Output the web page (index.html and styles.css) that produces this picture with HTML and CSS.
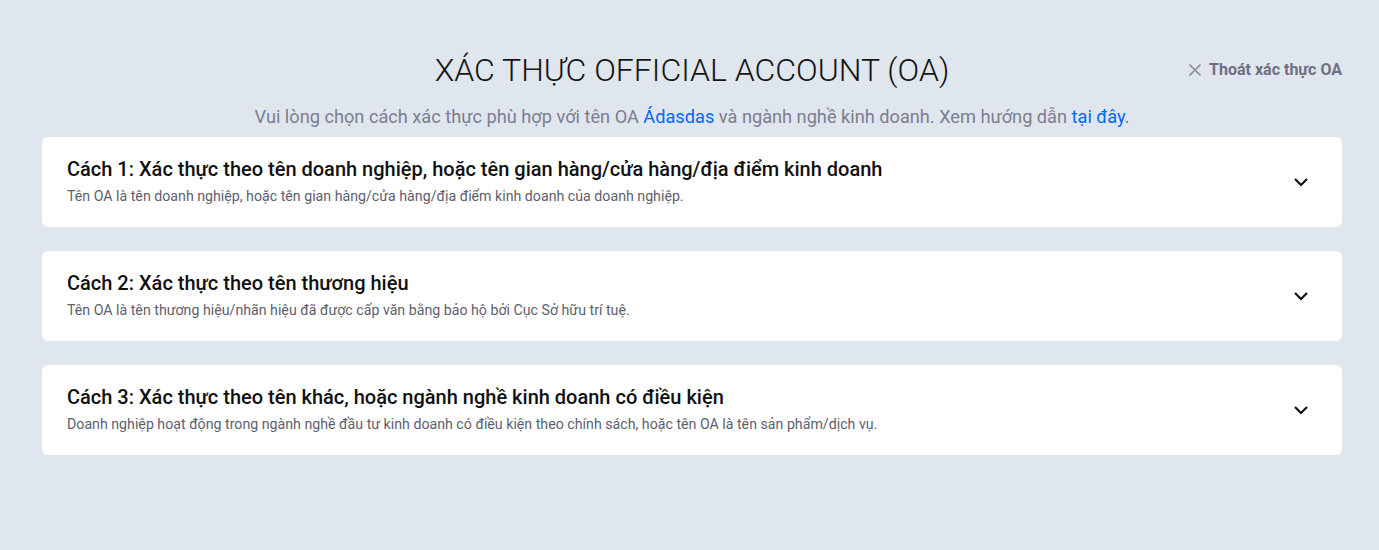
FILE: index.html
```html
<!DOCTYPE html>
<html lang="vi">
<head>
<meta charset="utf-8">
<link rel="stylesheet" href="styles.css">
</head>
<body>
<div class="page">
  <header class="header">
    <h1 class="title">XÁC THỰC OFFICIAL ACCOUNT (OA)</h1>
    <a class="exit" href="#">
      <svg class="exit-icon" width="14" height="14" viewBox="0 0 14 14"><path d="M1.5 1.5 L12.5 12.5 M12.5 1.5 L1.5 12.5" stroke="#8a8a9c" stroke-width="1.6" fill="none"/></svg>
      <span>Thoát xác thực OA</span>
    </a>
  </header>
  <p class="subtitle">Vui lòng chọn cách xác thực phù hợp với tên OA <span class="link">Ádasdas</span> và ngành nghề kinh doanh. Xem hướng dẫn <span class="link">tại đây</span>.</p>
  <div class="cards">
    <div class="card">
      <div class="card-text">
        <div class="card-title">Cách 1: Xác thực theo tên doanh nghiệp, hoặc tên gian hàng/cửa hàng/địa điểm kinh doanh</div>
        <div class="card-desc">Tên OA là tên doanh nghiệp, hoặc tên gian hàng/cửa hàng/địa điểm kinh doanh của doanh nghiệp.</div>
      </div>
      <svg class="chev" width="16" height="16" viewBox="0 0 16 16"><path d="M2 5 L8 11 L14 5" stroke="#111" stroke-width="2.2" fill="none"/></svg>
    </div>
    <div class="card">
      <div class="card-text">
        <div class="card-title">Cách 2: Xác thực theo tên thương hiệu</div>
        <div class="card-desc">Tên OA là tên thương hiệu/nhãn hiệu đã được cấp văn bằng bảo hộ bởi Cục Sở hữu trí tuệ.</div>
      </div>
      <svg class="chev" width="16" height="16" viewBox="0 0 16 16"><path d="M2 5 L8 11 L14 5" stroke="#111" stroke-width="2.2" fill="none"/></svg>
    </div>
    <div class="card">
      <div class="card-text">
        <div class="card-title">Cách 3: Xác thực theo tên khác, hoặc ngành nghề kinh doanh có điều kiện</div>
        <div class="card-desc">Doanh nghiệp hoạt động trong ngành nghề đầu tư kinh doanh có điều kiện theo chính sách, hoặc tên OA là tên sản phẩm/dịch vụ.</div>
      </div>
      <svg class="chev" width="16" height="16" viewBox="0 0 16 16"><path d="M2 5 L8 11 L14 5" stroke="#111" stroke-width="2.2" fill="none"/></svg>
    </div>
  </div>
</div>
</body>
</html>
```
FILE: styles.css
```css
* { box-sizing: border-box; }
html, body { margin: 0; padding: 0; }
body {
  background: #dfe6ed;
  font-family: Roboto, "Liberation Sans", sans-serif;
  height: 550px;
}
.page {
  width: 1300px;
  margin-left: 42px;
  padding-top: 50px;
}
.header {
  position: relative;
  height: 40px;
  display: flex;
  justify-content: center;
  align-items: center;
}
.title {
  margin: 0;
  font-weight: 300;
  font-size: 32px;
  line-height: 40px;
  color: #141414;
}
.exit {
  position: absolute;
  right: 0;
  top: 10px;
  display: flex;
  align-items: center;
  gap: 7px;
  text-decoration: none;
  color: #6e6e84;
  font-size: 16px;
  font-weight: 700;
}
.exit-icon { display: block; }
.subtitle {
  margin: 15px 0 0;
  text-align: center;
  font-size: 18.2px;
  line-height: 24px;
  color: #7d7d92;
}
.link { color: #0068ff; }
.cards {
  margin-top: 8px;
  display: flex;
  flex-direction: column;
  gap: 24px;
}
.card {
  background: #fff;
  border-radius: 6px;
  height: 90px;
  padding: 0 33px 0 25px;
  display: flex;
  align-items: center;
  justify-content: space-between;
}
.card-text { padding-bottom: 2px; }
.card-title {
  font-size: 20px;
  font-weight: 500;
  line-height: 24px;
  color: #111;
}
.card-desc {
  margin-top: 6px;
  font-size: 14.2px;
  line-height: 18px;
  color: #5e5e6e;
}
.chev { display: block; }
```
